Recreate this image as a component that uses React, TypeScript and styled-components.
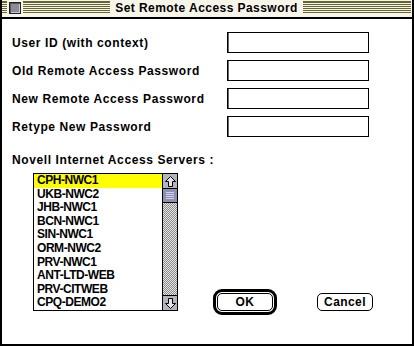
import React from "react";
import styled, { createGlobalStyle } from "styled-components";

const servers = [
    "CPH-NWC1",
    "UKB-NWC2",
    "JHB-NWC1",
    "BCN-NWC1",
    "SIN-NWC1",
    "ORM-NWC2",
    "PRV-NWC1",
    "ANT-LTD-WEB",
    "PRV-CITWEB",
    "CPQ-DEMO2",
];

const fields = [
    "User ID (with context)",
    "Old Remote Access Password",
    "New Remote Access Password",
    "Retype New Password",
];

// STYLES
const GlobalStyle = createGlobalStyle`
    html, body {
        margin: 0;
        padding: 0;
        background: #fff;
    }
    * {
        box-sizing: border-box;
    }
`;

const Window = styled.div`
    width: 414px;
    height: 346px;
    display: flex;
    flex-direction: column;
    background: #fff;
    border-left: 2px solid #000;
    border-right: 2px solid #000;
    border-bottom: 2px solid #000;
    font-family: "Liberation Sans", Arial, sans-serif;
    font-weight: bold;
    font-size: 12px;
    color: #000;
`;

const TitleBar = styled.div`
    height: 19px;
    flex-shrink: 0;
    display: flex;
    align-items: center;
    padding: 0 1px 2px 0;
    background: #f7f5e9;
    border-bottom: 2px solid #000;
`;

const TitleSide = styled.div`
    flex: 1;
    display: flex;
    align-items: center;
`;

const Stripes = styled.div<{ $grow?: boolean }>`
    height: 13px;
    width: ${(p) => (p.$grow ? "auto" : "5px")};
    flex: ${(p) => (p.$grow ? 1 : "none")};
    background: repeating-linear-gradient(
        to bottom,
        #66662e 0 1px,
        transparent 1px 2px
    );
    background-position: 0 1px;
`;

const CloseBox = styled.div`
    width: 12px;
    height: 12px;
    margin: 0 2px;
    border: 1px solid #222;
    background: #8c8c98;
    box-shadow: inset 1px 1px 0 #555, inset -1px -1px 0 #c8c8d0;
`;

const Title = styled.span`
    padding: 0 5px;
    line-height: 14px;
    letter-spacing: 0.45px;
    white-space: nowrap;
`;

const Body = styled.div`
    flex: 1;
    padding: 13px 0 0 10px;
    display: flex;
    flex-direction: column;
`;

const FormGrid = styled.div`
    display: grid;
    grid-template-columns: 215px 142px;
    grid-auto-rows: 21px;
    row-gap: 7px;
    align-items: center;
`;

const Label = styled.label`
    line-height: 14px;
    letter-spacing: 0.6px;
    white-space: nowrap;
`;

const Field = styled.input`
    width: 142px;
    height: 21px;
    border: 1px solid #000;
    box-shadow: inset 1px 0 0 #666;
    background: #fff;
    outline: none;
    padding: 0 4px;
    font: inherit;
`;

const ServersLabel = styled.div`
    margin-top: 16px;
    line-height: 14px;
    letter-spacing: 0.6px;
`;

const ListRow = styled.div`
    display: flex;
    align-items: flex-end;
    margin-top: 6px;
    padding-left: 21px;
`;

const ListBox = styled.div`
    width: 145px;
    height: 138px;
    display: flex;
    border: 1px solid #000;
`;

const Items = styled.ul`
    flex: 1;
    list-style: none;
    margin: 0;
    padding: 0;
`;

const Item = styled.li<{ $selected?: boolean }>`
    height: 13.6px;
    line-height: 13.6px;
    padding-left: 3px;
    background: ${(p) => (p.$selected ? "#ffff00" : "transparent")};
    white-space: nowrap;
    letter-spacing: -0.45px;
`;

const ScrollBar = styled.div`
    width: 15px;
    display: flex;
    flex-direction: column;
    border-left: 1px solid #000;
`;

const ArrowBox = styled.div<{ $down?: boolean }>`
    height: 15px;
    display: flex;
    align-items: center;
    justify-content: center;
    background: #b4b4bc;
    border-top: ${(p) => (p.$down ? "1px solid #000" : "none")};
    border-bottom: ${(p) => (p.$down ? "none" : "1px solid #000")};
`;

const Thumb = styled.div`
    height: 14px;
    display: flex;
    flex-direction: column;
    justify-content: center;
    gap: 1px;
    padding: 0 3px;
    background: #8f8fb0;
    border-bottom: 1px solid #000;
`;

const ThumbLine = styled.div`
    height: 1px;
    background: #d0d0f4;
`;

const Track = styled.div`
    flex: 1;
    background: repeating-conic-gradient(#8a8a8a 0 25%, #e6e6e6 0 50%) 0 0 / 2px 2px;
`;

const Buttons = styled.div`
    display: flex;
    gap: 44px;
    margin-left: 39px;
`;

const Button = styled.button<{ $default?: boolean }>`
    width: 56px;
    height: 18px;
    padding: 0;
    border: 1px solid #000;
    border-radius: 5px;
    background: #fff;
    font: inherit;
    color: #000;
    line-height: 16px;
    letter-spacing: 0.4px;
    outline: ${(p) => (p.$default ? "3px solid #000" : "none")};
    outline-offset: 1px;
`;

const Arrow = ({ down }: { down?: boolean }) => (
    <svg width="11" height="11" viewBox="0 0 11 11">
        <polygon
            points="5.5,0.5 10.5,5.5 7.5,5.5 7.5,10.5 3.5,10.5 3.5,5.5 0.5,5.5"
            fill="#e4e4ea"
            stroke="#000"
            strokeWidth="1"
            transform={down ? "rotate(180 5.5 5.5)" : undefined}
        />
    </svg>
);

// COMPONENT
const App: React.FC = () => {
    return (
        <>
            <GlobalStyle />
            <Window>
                <TitleBar>
                    <TitleSide>
                        <Stripes />
                        <CloseBox />
                        <Stripes $grow />
                    </TitleSide>
                    <Title>Set Remote Access Password</Title>
                    <TitleSide>
                        <Stripes $grow />
                    </TitleSide>
                </TitleBar>
                <Body>
                    <FormGrid>
                        {fields.map((label, i) => (
                            <React.Fragment key={label}>
                                <Label htmlFor={`field-${i}`}>{label}</Label>
                                <Field
                                    id={`field-${i}`}
                                    type={i === 0 ? "text" : "password"}
                                />
                            </React.Fragment>
                        ))}
                    </FormGrid>
                    <ServersLabel>Novell Internet Access Servers :</ServersLabel>
                    <ListRow>
                        <ListBox>
                            <Items>
                                {servers.map((s, i) => (
                                    <Item key={s} $selected={i === 0}>
                                        {s}
                                    </Item>
                                ))}
                            </Items>
                            <ScrollBar>
                                <ArrowBox>
                                    <Arrow />
                                </ArrowBox>
                                <Thumb>
                                    <ThumbLine />
                                    <ThumbLine />
                                    <ThumbLine />
                                    <ThumbLine />
                                </Thumb>
                                <Track />
                                <ArrowBox $down>
                                    <Arrow down />
                                </ArrowBox>
                            </ScrollBar>
                        </ListBox>
                        <Buttons>
                            <Button $default>OK</Button>
                            <Button>Cancel</Button>
                        </Buttons>
                    </ListRow>
                </Body>
            </Window>
        </>
    );
};

export default App;
